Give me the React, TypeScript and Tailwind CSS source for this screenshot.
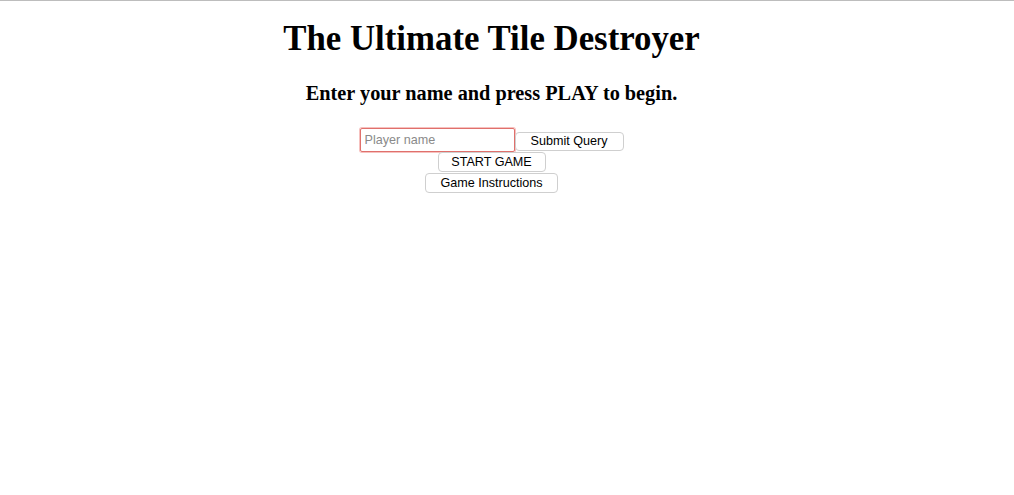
export default function App() {
  return (
    <div className="min-h-screen bg-white border-t border-[#bdbdbd]">
      <div className="w-[983px] flex flex-col items-center">
        <h1 className="mt-[18px] text-[34.8px] leading-[40px] font-bold text-black font-['Liberation_Serif',serif]">
          The Ultimate Tile Destroyer
        </h1>
        <h3 className="mt-[23px] text-[20.3px] leading-[23px] font-bold text-black font-['Liberation_Serif',serif]">
          Enter your name and press PLAY to begin.
        </h3>
        <div className="mt-[23px] flex flex-col items-center font-['Liberation_Sans',Arial,sans-serif] text-[12.6px] text-black">
          <div className="flex items-end">
            <input
              type="text"
              placeholder="Player name"
              className="w-[155px] h-[24px] px-[4px] border border-[#e0706c] rounded-[2px] shadow-[0_0_0_1px_#f6c1bf] outline-none text-[12.6px] placeholder:text-[#8a8a8a]"
            />
            <button className="mb-[1px] w-[109px] h-[19px] border border-[#cfcfcf] rounded-[4px] bg-white leading-none">
              Submit Query
            </button>
          </div>
          <button className="w-[108px] h-[20px] border border-[#cfcfcf] rounded-[4px] bg-white leading-none">
            START GAME
          </button>
          <button className="mt-[1px] w-[133px] h-[20px] border border-[#cfcfcf] rounded-[4px] bg-white leading-none">
            Game Instructions
          </button>
        </div>
      </div>
    </div>
  );
}
